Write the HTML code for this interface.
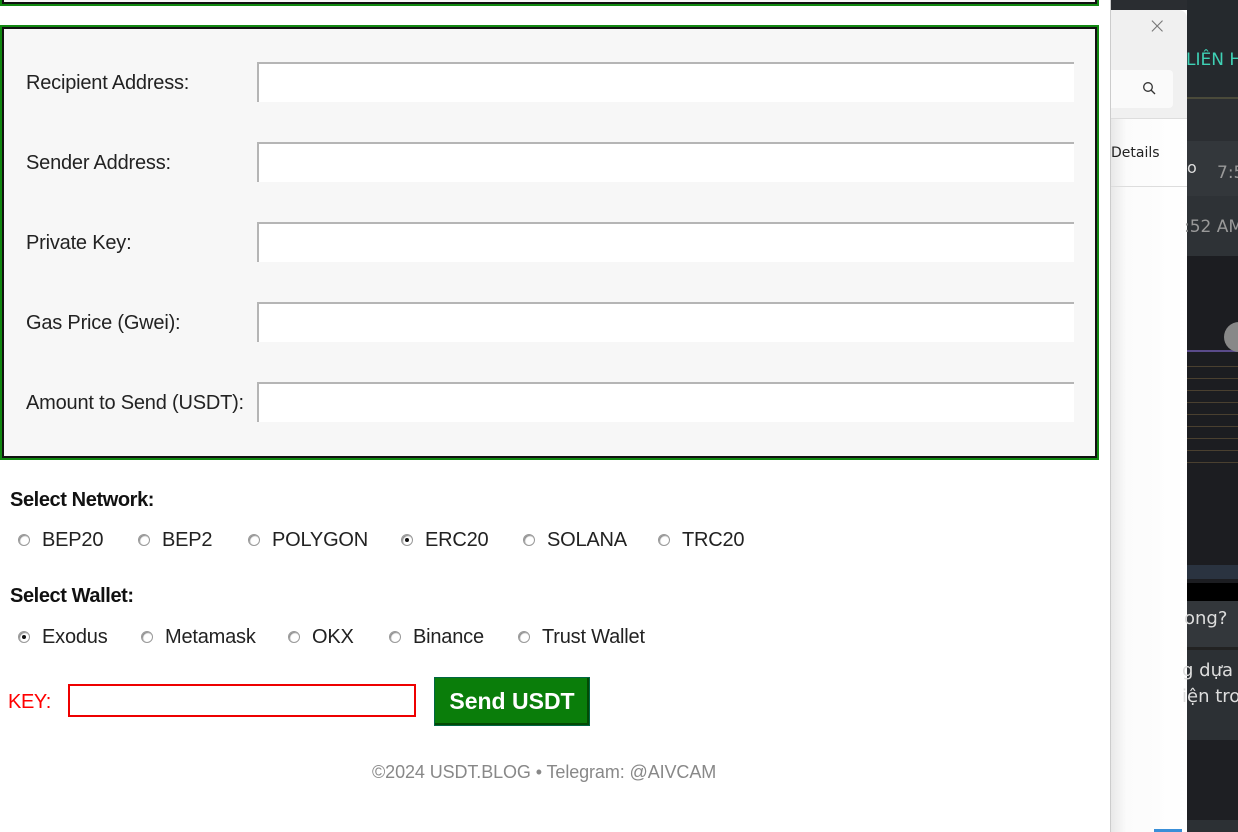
<!DOCTYPE html>
<html><head><meta charset="utf-8"><style>
*{box-sizing:border-box;margin:0;padding:0}
body{width:1238px;height:832px;overflow:hidden;background:#fff;position:relative;font-family:"Liberation Sans",Arial,sans-serif}
.abs{position:absolute}
.box{position:absolute;border:2px solid #118811;}
.box .in{position:absolute;inset:0;border:2px solid #111;background:#f7f7f7}
.lab{position:absolute;left:26px;font-size:20px;color:#222;letter-spacing:-0.2px}
.inp{position:absolute;left:257px;width:817px;height:40px;background:#fff;border-top:2px solid #b5b5b5;border-left:2px solid #b5b5b5}
.h{position:absolute;left:10px;font-weight:bold;font-size:20px;color:#111;letter-spacing:-0.4px}
.r{position:absolute;font-size:20px;color:#222;letter-spacing:-0.2px}
.r i{position:absolute;left:-24px;top:5px;width:12px;height:12px;border-radius:50%;border:1px solid #999;background:#fff;box-shadow:inset 1px 1px 1px #888}
.r i.c:after{content:"";position:absolute;left:3px;top:3px;width:4px;height:4px;border-radius:50%;background:#111}
.dk{position:absolute;left:1187px;width:51px}
.dt{position:absolute;font-family:"DejaVu Sans",sans-serif;font-size:17px;white-space:nowrap}
</style></head><body>
<div class="box" style="left:0;top:-10px;width:1099px;height:16px"><div class="in"></div></div>
<div class="box" style="left:0;top:25px;width:1099px;height:435px"><div class="in"></div></div>
<div class="lab" style="top:72px">Recipient Address:</div><div class="inp" style="top:62px"></div>
<div class="lab" style="top:152px">Sender Address:</div><div class="inp" style="top:142px"></div>
<div class="lab" style="top:232px">Private Key:</div><div class="inp" style="top:222px"></div>
<div class="lab" style="top:312px">Gas Price (Gwei):</div><div class="inp" style="top:302px"></div>
<div class="lab" style="top:392px">Amount to Send (USDT):</div><div class="inp" style="top:382px"></div>

<div class="h" style="top:489px">Select Network:</div>
<div class="r" style="left:42px;top:529px"><i></i>BEP20</div>
<div class="r" style="left:162px;top:529px"><i></i>BEP2</div>
<div class="r" style="left:272px;top:529px"><i></i>POLYGON</div>
<div class="r" style="left:425px;top:529px"><i class="c"></i>ERC20</div>
<div class="r" style="left:547px;top:529px"><i></i>SOLANA</div>
<div class="r" style="left:682px;top:529px"><i></i>TRC20</div>
<div class="h" style="top:585px">Select Wallet:</div>
<div class="r" style="left:42px;top:626px"><i class="c"></i>Exodus</div>
<div class="r" style="left:165px;top:626px"><i></i>Metamask</div>
<div class="r" style="left:312px;top:626px"><i></i>OKX</div>
<div class="r" style="left:413px;top:626px"><i></i>Binance</div>
<div class="r" style="left:542px;top:626px"><i></i>Trust Wallet</div>

<div class="abs" style="left:8px;top:691px;font-size:20px;color:#f00;letter-spacing:-0.4px">KEY:</div>
<div class="abs" style="left:68px;top:684px;width:348px;height:33px;border:2px solid #e00;background:#fff"></div>
<div class="abs" style="left:434px;top:677px;width:156px;height:49px;background:#0a7d0a;border:1px solid #064;box-shadow:inset -2px -2px 0 #044a04;color:#fff;font-weight:bold;font-size:23px;text-align:center;line-height:47px">Send USDT</div>
<div class="abs" style="left:372px;top:762px;font-size:18px;color:#888;letter-spacing:-0.1px">©2024 USDT.BLOG • Telegram: @AIVCAM</div>

<!-- side panel -->
<div class="abs" style="left:1110px;top:0;width:1px;height:832px;background:#ccc"></div>
<div class="abs" style="left:1111px;top:0;width:77px;height:832px;background:linear-gradient(90deg,#e8e8e8,#fbfbfb 20%,#fff)"></div>
<div class="abs" style="left:1111px;top:0;width:77px;height:10px;background:#2a2d31"></div>
<div class="abs" style="left:1111px;top:10px;width:76px;height:108px;background:#f0f0f0;border-radius:0 8px 0 0"></div>
<div class="abs" style="left:1148px;top:14px;font-size:22px;color:#777;font-family:'DejaVu Sans',sans-serif;font-weight:200">×</div>
<div class="abs" style="left:1111px;top:70px;width:62px;height:38px;background:#fafafa;border-radius:0 4px 4px 0"></div>
<svg class="abs" style="left:1142px;top:81px" width="14" height="14" viewBox="0 0 14 14"><circle cx="6" cy="6" r="4.3" fill="none" stroke="#333" stroke-width="1.3"/><path d="M9 9l4 4" stroke="#333" stroke-width="1.3"/></svg>
<div class="abs" style="left:1111px;top:118px;width:76px;height:1px;background:#ddd"></div>
<div class="abs" style="left:1111px;top:145px;font-size:14px;color:#222;font-family:'DejaVu Sans',sans-serif">Details</div>
<div class="abs" style="left:1111px;top:186px;width:76px;height:1px;background:#ddd"></div>
<div class="abs" style="left:1154px;top:829px;width:28px;height:3px;background:#3a8fd8"></div>

<!-- dark app -->
<div class="dk" style="top:0;height:97px;background:#25292d"></div>
<div class="dt" style="left:1186px;top:50px;color:#3fd1b5">LIÊN H</div>
<div class="dk" style="top:97px;height:2px;background:#4a4a3a"></div>
<div class="dk" style="top:99px;height:42px;background:#2b2e32"></div>
<div class="dk" style="top:141px;height:55px;background:#33373b"></div>
<div class="dt" style="left:1187px;top:158px;color:#ddd;font-size:16px">o</div>
<div class="dt" style="left:1217px;top:163px;color:#999">7:5</div>
<div class="dk" style="top:196px;height:60px;background:#2e3236"></div>
<div class="dt" style="left:1184px;top:217px;color:#999">:52 AM</div>
<div class="dk" style="top:256px;height:345px;background:#1c1d21"></div>
<div class="dk" style="top:350px;height:2px;background:#5a4b8a"></div>
<div class="dk" style="top:360px;height:110px;background:repeating-linear-gradient(#1c1d21 0 6px,#4a4030 6px 7px,#1c1d21 7px 12px)"></div>
<div class="abs" style="left:1224px;top:322px;width:30px;height:30px;border-radius:50%;background:#888"></div>
<div class="dk" style="top:565px;height:14px;background:#2a3340"></div>
<div class="dk" style="top:583px;height:18px;background:#000"></div>
<div class="dk" style="top:601px;height:46px;background:#33373b"></div>
<div class="dt" style="left:1184px;top:608px;color:#ddd;font-size:18px">ong?</div>
<div class="dk" style="top:647px;height:3px;background:#222"></div>
<div class="dk" style="top:650px;height:90px;background:#2c3034"></div>
<div class="dt" style="left:1182px;top:660px;color:#ddd;font-size:18px">g dựa t</div>
<div class="dt" style="left:1182px;top:686px;color:#ddd;font-size:18px">iện tro</div>
<div class="dk" style="top:740px;height:80px;background:#1e1f23"></div>
<div class="dk" style="top:820px;height:12px;background:#2c3034"></div>
</body></html>
